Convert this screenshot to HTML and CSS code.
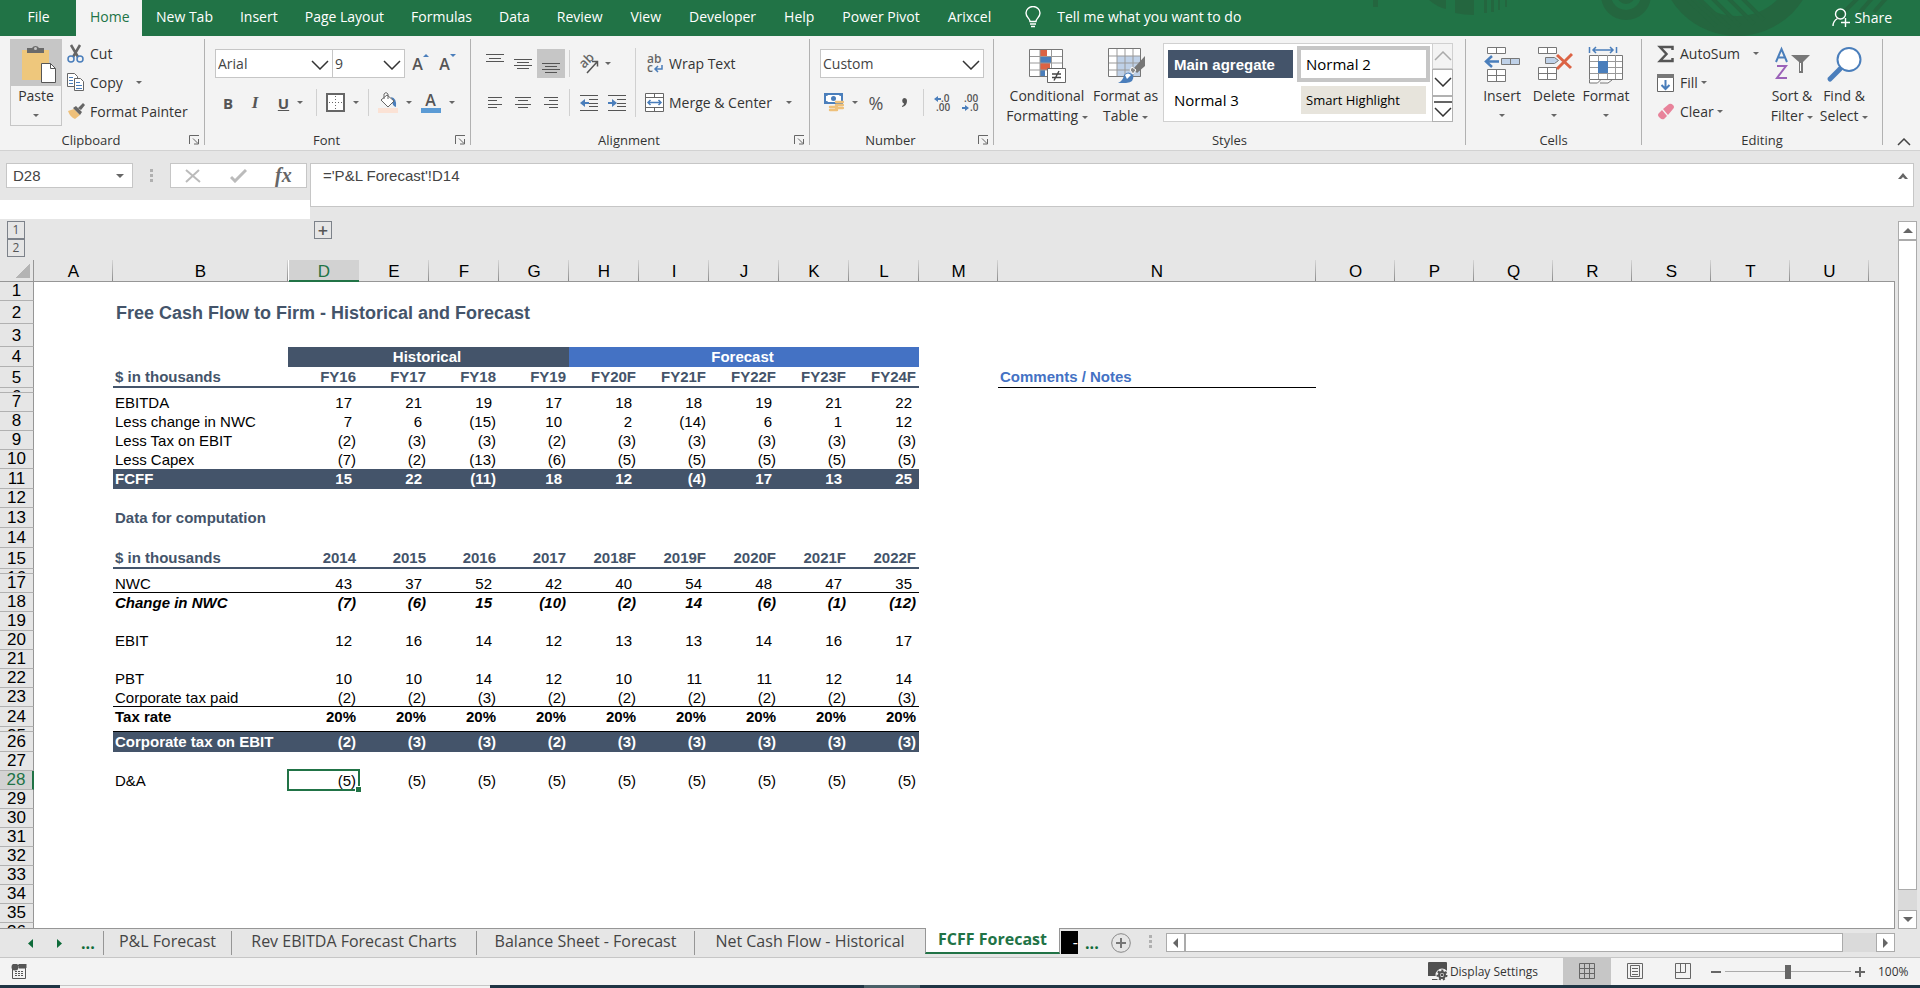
FILE: index.html
```html
<!DOCTYPE html>
<html lang="en">
	<head>
		<meta charset="UTF-8" />
		<meta name="viewport" content="width=device-width, initial-scale=1.0" />
		<title>FCFF Forecast - Excel</title>
		<link rel="stylesheet" href="styles.css">
	</head>
	<body>
		<header class="titlebar">
			<svg class="deco" width="560" height="36" viewBox="0 0 560 36">
				<g fill="#24663f">
					<rect x="13" width="5" height="7" />
					<path d="M69 0h17v9q-9-2-17-9zM95 0h19v15q-10 0-19-2z" />
					<path d="M124 0h3v13h-3zM131 0h3v12h-3zM138 0h2v10h-2zM145 0h2v7h-2z" />
				</g>
				<g fill="none" stroke="#24663f">
					<circle cx="266" cy="-5" r="20" stroke-width="10" />
					<circle cx="266" cy="-5" r="6" stroke-width="6" />
					<circle cx="377" cy="-42" r="68" stroke-width="20" />
					<path d="M324-4l32 30M336-4l34 32M350-4l30 30M366-4l28 28M380-4l24 24M476 20l24-24M500 12l14-16M514 12l14-16" stroke-width="4" />
				</g>
			</svg>
			<nav class="tabs">
				<button class="file">File</button>
				<button class="home">Home</button>
				<button>New Tab</button>
				<button>Insert</button>
				<button>Page Layout</button>
				<button>Formulas</button>
				<button>Data</button>
				<button>Review</button>
				<button>View</button>
				<button>Developer</button>
				<button>Help</button>
				<button>Power Pivot</button>
				<button>Arixcel</button>
			</nav>
			<button class="tellme">
				<svg width="16" height="22" viewBox="0 0 16 22" fill="none" stroke="#fff" stroke-width="1.4"><path d="M5 15.500c0-3-4-4-4-8.500a7 6.500 0 0 1 14 0c0 4.500-4 5.500-4 8.500zM5 18h6M6 20.500h4" /></svg>
				Tell me what you want to do
			</button>
			<button class="share">
				<svg width="18" height="20" viewBox="0 0 18 20" fill="none" stroke="#fff" stroke-width="1.400"><circle cx="8.500" cy="6" r="5" /><path d="M1 18c0-4 2-6 4.500-7.500M9 14.500h9M13.500 10v9" /></svg>
				Share
			</button>
		</header>

		<section class="ribbon">
			<div class="group clipboard">
				<div class="body">
					<button class="paste">
						<span class="paste-icon">
							<svg width="36" height="40" viewBox="0 0 36 40"><path d="M2 5h27v30H2z" fill="#eec77c" /><path d="M7 8V3h5a4 4 0 0 1 7 0h5v5z" fill="#6a6a6a" /><circle cx="15.500" cy="3.500" r="1.500" fill="#c6c6c6" /><path d="M21.500 18.500h9l5 5v14h-14z" fill="#fff" stroke="#555" /><path d="M30.500 18.500v5h5" fill="none" stroke="#555" /></svg>
						</span>
						<span>Paste</span>
						<i class="caret"></i>
					</button>
					<div class="stack">
						<button>
							<svg width="18" height="19" viewBox="0 0 18 19" fill="none"><path d="M4 1l7 12M13 1L6 13" stroke="#666" stroke-width="2.500" /><circle cx="4" cy="15" r="3" stroke="#4a7ebb" stroke-width="1.500" /><circle cx="13" cy="15" r="3" stroke="#4a7ebb" stroke-width="1.500" /></svg>
							Cut
						</button>
						<button>
							<svg width="18" height="19" viewBox="0 0 18 19" fill="#fff" stroke="#666"><path d="M.5.500h7l3 3v10H.500z" /><path d="M7.500 5.500h6l3 3v9h-9z" /><path d="M2 4.500h4M2 7.500h4M2 10.500h4M9 9.500h4M9 12.500h6M9 15.500h6" stroke="#4a7ebb" /></svg>
							Copy <i class="caret far"></i>
						</button>
						<button>
							<svg width="18" height="17" viewBox="0 0 18 17"><path d="M1 8l6-2 6 6-5 4q-5-2-7-8z" fill="#eec07a" /><path d="M6 5l3-2 6 6-2 3zM11 5l5-5 2 2-4 5z" fill="#666" /></svg>
							Format Painter
						</button>
					</div>
				</div>
				<footer><span>Clipboard</span><svg class="launch" width="11" height="10" viewBox="0 0 11 10" fill="none" stroke="#666"><path d="M.5 9V.5H10M4 3.500l5 5M9.500 4v5H5" /></svg></footer>
			</div>

			<div class="group font">
				<div class="body rows">
					<div class="row">
						<label class="combo family"><select aria-label="Font"><option>Arial</option></select><svg width="18" height="10" viewBox="0 0 18 10" fill="none" stroke="#333" stroke-width="1.500"><path d="M1 1l8 8 8-8" /></svg></label>
						<label class="combo size"><select aria-label="Font size"><option>9</option></select><svg width="18" height="10" viewBox="0 0 18 10" fill="none" stroke="#333" stroke-width="1.500"><path d="M1 1l8 8 8-8" /></svg></label>
						<button class="tool grow"><b>A</b><svg width="6" height="3" viewBox="0 0 6 3" fill="#4a7ebb"><path d="M0 3l3-3 3 3z" /></svg></button>
						<button class="tool grow"><b>A</b><svg width="6" height="3" viewBox="0 0 6 3" fill="#4a7ebb"><path d="M0 0l3 3 3-3z" /></svg></button>
					</div>
					<div class="row">
						<button class="tool letter"><b>B</b></button>
						<button class="tool letter"><i>I</i></button>
						<button class="tool wide letter"><u>U</u><i class="caret"></i></button>
						<span class="sep"></span>
						<button class="tool wide">
							<svg width="19" height="19" viewBox="0 0 19 19" fill="#fff" stroke="#666"><rect x="1" y="1" width="17" height="17" stroke-width="2" /><path d="M9.500 3v14M3 9.500h14" stroke-dasharray="1 2" /></svg>
							<i class="caret"></i>
						</button>
						<span class="sep"></span>
						<button class="tool wide">
							<svg width="20" height="21" viewBox="0 0 20 21"><path d="M13 5q6 1 5 10-4-1-4-7z" fill="#4a7ebb" /><path d="M3 8l6-5 7 6-6 6zM6 7V2q2-3 4 0v5" fill="#fff" stroke="#666" /><path d="M0 16h20v5H0z" fill="#fbe2d5" /></svg>
							<i class="caret"></i>
						</button>
						<button class="tool wide">
							<span class="fontcolor">A</span>
							<i class="caret"></i>
						</button>
					</div>
				</div>
				<footer><span>Font</span><svg class="launch" width="11" height="10" viewBox="0 0 11 10" fill="none" stroke="#666"><path d="M.5 9V.5H10M4 3.500l5 5M9.500 4v5H5" /></svg></footer>
			</div>

			<div class="group align">
				<div class="body">
					<div class="rows">
						<div class="row">
							<button class="tool" aria-label="Top align"><svg width="18" height="20" viewBox="0 0 18 20" stroke="#555"><path d="M0 .5h18M3 4.500h12M0 7.500h18" /></svg></button>
							<button class="tool" aria-label="Middle align"><svg width="18" height="20" viewBox="0 0 18 20" stroke="#555"><path d="M0 5.500h18M3 8.500h12M0 11.500h18M3 14.500h12" /></svg></button>
							<button class="tool on" aria-label="Bottom align"><svg width="18" height="20" viewBox="0 0 18 20" stroke="#555"><path d="M0 9.500h18M3 12.500h12M0 15.500h18M3 18.500h12" /></svg></button>
							<span class="sep"></span>
							<button class="tool wide orient" aria-label="Orientation">
								<svg width="20" height="20" viewBox="0 0 20 20"><text transform="translate(5 15) rotate(-45)" font-family="Open Sans" font-size="13" font-weight="600" fill="#666">ab</text><path d="M8 19L18 8M13 7.500h5.500v5" fill="none" stroke="#555" stroke-width="1.500" /></svg>
								<i class="caret"></i>
							</button>
						</div>
						<div class="row">
							<button class="tool" aria-label="Align left"><svg width="14" height="11" viewBox="0 0 14 11" stroke="#555"><path d="M0 .5h14M0 3.500h9M0 7.500h14M0 10.500h9" /></svg></button>
							<button class="tool" aria-label="Center"><svg width="16" height="11" viewBox="0 0 16 11" stroke="#555"><path d="M0 .5h16M3 3.500h10M0 7.500h16M3 10.500h10" /></svg></button>
							<button class="tool" aria-label="Align right"><svg width="14" height="11" viewBox="0 0 14 11" stroke="#555"><path d="M0 .5h14M5 3.500h9M0 7.500h14M5 10.500h9" /></svg></button>
							<span class="sep"></span>
							<button class="tool" aria-label="Decrease indent"><svg width="18" height="16" viewBox="0 0 18 16"><path d="M0 .5h18M9 4.500h9M9 8.500h9M9 11.500h9M0 15.500h18" stroke="#555" /><path d="M0 8l5-4v3h4v2H5v3z" fill="#4a7ebb" /></svg></button>
							<button class="tool" aria-label="Increase indent"><svg width="18" height="16" viewBox="0 0 18 16"><path d="M0 .5h18M9 4.500h9M9 8.500h9M9 11.500h9M0 15.500h18" stroke="#555" /><path d="M9 8l-5-4v3H0v2h4v3z" fill="#4a7ebb" /></svg></button>
						</div>
					</div>
					<span class="sep tall"></span>
					<div class="rows text">
						<button class="labelled">
							<svg width="19" height="20" viewBox="0 0 19 20"><text x="2" y="9" font-family="Open Sans" font-size="12" font-weight="600" fill="#666">ab</text><text x="2" y="18" font-family="Open Sans" font-size="12" font-weight="600" fill="#666">c</text><path d="M10 15h7v-4M13 12l-3 3 3 3" fill="none" stroke="#4a7ebb" stroke-width="1.500" /></svg>
							Wrap Text
						</button>
						<button class="labelled">
							<svg width="19" height="19" viewBox="0 0 19 19" fill="#fff" stroke="#666"><path d="M.5.500h18v18H.500zM.5 4.500h18M.5 14.500h18M9.500 0v4M9.500 15v4" /><path d="M3 9.500h13M5.500 7L3 9.500 5.500 12M13.500 7L16 9.500 13.500 12" fill="none" stroke="#4a7ebb" stroke-width="1.500" /></svg>
							Merge &amp; Center <i class="caret far"></i>
						</button>
					</div>
				</div>
				<footer><span>Alignment</span><svg class="launch" width="11" height="10" viewBox="0 0 11 10" fill="none" stroke="#666"><path d="M.5 9V.5H10M4 3.500l5 5M9.500 4v5H5" /></svg></footer>
			</div>

			<div class="group number">
				<div class="body rows">
					<div class="row">
						<label class="combo format"><select aria-label="Number format"><option>Custom</option></select><svg width="18" height="10" viewBox="0 0 18 10" fill="none" stroke="#333" stroke-width="1.500"><path d="M1 1l8 8 8-8" /></svg></label>
					</div>
					<div class="row">
						<button class="tool wide" aria-label="Accounting format">
							<svg width="20" height="19" viewBox="0 0 20 19"><path d="M0 0h19v11H0z" fill="#4a7ebb" /><path d="M2 3q2 0 2-1h11q0 1 2 1v5q-2 0-2 1H4q0-1-2-1z" fill="#fff" /><circle cx="9.500" cy="5.500" r="2.500" fill="#4a7ebb" /><path d="M12 9h7M12 12h7M12 15h7M6 14h7M6 17h7" stroke="#eec07a" stroke-width="2.400" stroke-linecap="round" /></svg>
							<i class="caret"></i>
						</button>
						<button class="tool percent">%</button>
						<button class="tool" aria-label="Comma style"><svg width="6" height="9" viewBox="0 0 6 9" fill="#555"><path d="M3 0a3 3 0 0 1 3 3q0 5-5 6v-1q2-1 2-2.500a3 3 0 0 1 0-5.500z" /></svg></button>
						<span class="sep"></span>
						<button class="tool" aria-label="Increase decimal"><svg width="17" height="18" viewBox="0 0 17 18" font-family="Open Sans" font-size="10" font-weight="600" fill="#555"><path d="M0 5l4-3v2h3v2H4v2z" fill="#4a7ebb" /><text x="7" y="8">.0</text><text x="2" y="17">.00</text></svg></button>
						<button class="tool" aria-label="Decrease decimal"><svg width="17" height="18" viewBox="0 0 17 18" font-family="Open Sans" font-size="10" font-weight="600" fill="#555"><path d="M7 14l-4-3v2H0v2h3v2z" fill="#4a7ebb" /><text x="2" y="8">.00</text><text x="8" y="17">.0</text></svg></button>
					</div>
				</div>
				<footer><span>Number</span><svg class="launch" width="11" height="10" viewBox="0 0 11 10" fill="none" stroke="#666"><path d="M.5 9V.5H10M4 3.500l5 5M9.500 4v5H5" /></svg></footer>
			</div>

			<div class="group styles">
				<div class="body">
					<button class="big cond">
						<svg width="38" height="36" viewBox="0 0 38 36"><path d="M1.500 1.500h33v27h-33z" fill="#fff" /><path d="M12 1h7v7h-7zM12 15h10v7H12z" fill="#dc6344" /><path d="M12 8h11v7H12zM12 22h5v7h-5z" fill="#4a7ebb" /><path d="M12 1v28M23.500 1v28M1 8.500h34M1 15h34M1 22h34" stroke="#999" fill="none" /><path d="M1.500 1.500h33v27h-33z" fill="none" stroke="#777" /><path d="M19.500 20.500h18v14h-18z" fill="#fff" stroke="#666" /><path d="M24 26h9M24 29.500h9M31 23l-5 9.500" stroke="#444" stroke-width="1.400" /></svg>
						<span>Conditional<br>Formatting <i class="caret"></i></span>
					</button>
					<button class="big">
						<svg width="38" height="36" viewBox="0 0 38 36"><path d="M1.500.500h32v28h-32z" fill="#fff" /><path d="M10 8h24v21H10z" fill="#bfd1e8" /><path d="M10 0v29M18 0v29M26 0v29M1 8h33M1 15h33M1 22h33" stroke="#999" /><path d="M1.500.500h32v28h-32z" fill="none" stroke="#777" /><path d="M38 8v10l-8 7-4-4z" fill="#777" /><path d="M29 22l-4-3-2 3 3 4z" fill="#888" stroke="#fff" /><path d="M11 35q5-2 6-8 4-5 9 0 2 7-7 8z" fill="#4a7ebb" /><path d="M18 27q3-3 6 0l-4 4z" fill="#fff" /></svg>
						<span>Format as<br>Table <i class="caret"></i></span>
					</button>
					<div class="gallery">
						<div class="swatches">
							<button class="agregate">Main agregate</button>
							<button class="picked">Normal 2</button>
							<button>Normal 3</button>
							<button class="smart">Smart Highlight</button>
						</div>
						<div class="scroller">
							<button class="dim" aria-label="Previous"><svg width="18" height="10" viewBox="0 0 18 10" fill="none" stroke="#aaa" stroke-width="1.500"><path d="M1 9l8-8 8 8" /></svg></button>
							<button aria-label="Next"><svg width="18" height="10" viewBox="0 0 18 10" fill="none" stroke="#333" stroke-width="1.500"><path d="M1 1l8 8 8-8" /></svg></button>
							<button aria-label="More"><svg width="18" height="16" viewBox="0 0 18 16" fill="none" stroke="#333" stroke-width="1.500"><path d="M0 1h18M1 7l8 8 8-8" /></svg></button>
						</div>
					</div>
				</div>
				<footer><span>Styles</span></footer>
			</div>

			<div class="group cells">
				<div class="body">
					<button class="big">
						<svg width="38" height="36" viewBox="0 0 38 36" fill="#fff" stroke="#777"><path d="M4.500.500h18v6h-18zM13.500 0v6M4.500 22.500h18v12h-18zM13.500 22v12M4 28.500h18" /><path d="M18.500 11.500h18v6h-18zM27.500 12v6" fill="#bfd1e8" /><path d="M16 14.500H3M9 9l-6 5.500 6 5.500" fill="none" stroke="#4a7ebb" stroke-width="2.500" /></svg>
						<span>Insert</span><i class="caret"></i>
					</button>
					<button class="big">
						<svg width="38" height="36" viewBox="0 0 38 36" fill="#fff" stroke="#777"><path d="M3.500.500h18v6h-18zM12.500 0v6M3.500 20.500h18v12h-18zM12.500 20v12M3 26.500h18" /><path d="M10.500 10.500h9l4 3-4 3h-9z" fill="#bfd1e8" /><path d="M22 8l14 13M37 7L22 22" stroke="#dc6344" stroke-width="3" /></svg>
						<span>Delete</span><i class="caret"></i>
					</button>
					<button class="big">
						<svg width="38" height="38" viewBox="0 0 38 38" fill="#fff" stroke="#777"><path d="M2.500 9.500h33v24h-33z" /><path d="M3 15.500h32M3 21.500h32M3 27.500h32M11.500 9v24M20.500 9v24M28.500 9v24" stroke="#999" /><path d="M11 15h10v12H11z" fill="#4a7ebb" stroke="none" /><path d="M2.500 34v3h8l3-3M13 37h8l4-3" /><path d="M2.500 1v6M29.500 1v6M6 4h20M9 1L6 4l3 3M23 1l3 3-3 3" fill="none" stroke="#4a7ebb" stroke-width="1.500" /></svg>
						<span>Format</span><i class="caret"></i>
					</button>
				</div>
				<footer><span>Cells</span></footer>
			</div>

			<div class="group editing">
				<div class="body">
					<div class="stack">
						<button>
							<svg width="18" height="18" viewBox="0 0 18 18" fill="none" stroke="#555" stroke-width="2.500"><path d="M15.500 5V2H3l6.500 7L3 16h12.500v-3" /></svg>
							AutoSum <i class="caret far"></i>
						</button>
						<button>
							<svg width="18" height="18" viewBox="0 0 18 18"><path d="M.5.500h16v17H.500z" fill="#fff" stroke="#666" /><path d="M0 0h17v4H0z" fill="#777" /><path d="M8.500 6v9M4.500 11l4 4 4-4" fill="none" stroke="#4a7ebb" stroke-width="2" /></svg>
							Fill <i class="caret"></i>
						</button>
						<button>
							<svg width="18" height="17" viewBox="0 0 18 17" fill="#e8829a"><path d="M6 6l6-5q2-1 4 1t0 4l-5 6zM5 7l5 6-3 3q-2 1-4-1l-1-1q-2-2 0-4z" /></svg>
							Clear <i class="caret"></i>
						</button>
					</div>
					<button class="big sort">
						<svg width="38" height="36" viewBox="0 0 38 36" fill="none" stroke-width="2"><path d="M3 15L8.500 2 14 15M5 10.500h7" stroke="#4a7ebb" /><path d="M4 19h9L4 31h10" stroke="#9b62b8" /><path d="M18 8h19l-7 7v11h-4V15z" fill="#777" stroke="none" /><path d="M27.500 16v8" stroke="#fff" stroke-width="1" /></svg>
						<span>Sort &amp;<br>Filter <i class="caret"></i></span>
					</button>
					<button class="big">
						<svg width="38" height="36" viewBox="0 0 38 36"><path d="M5 32l10-10" stroke="#4a7ebb" stroke-width="5" stroke-linecap="round" /><circle cx="24" cy="12.500" r="11.500" fill="#fff" stroke="#4a7ebb" stroke-width="2" /></svg>
						<span>Find &amp;<br>Select <i class="caret"></i></span>
					</button>
				</div>
				<footer><span>Editing</span></footer>
			</div>
			<button class="collapse" aria-label="Collapse the ribbon"><svg width="14" height="8" viewBox="0 0 14 8" fill="none" stroke="#444" stroke-width="1.500"><path d="M1 7l6-6 6 6" /></svg></button>
		</section>

		<section class="formulabar">
			<div class="left">
				<div class="namebox"><input aria-label="Name box" value="D28"><i class="caret big-caret"></i></div>
				<span class="grip"></span>
				<div class="fx">
					<button aria-label="Cancel"><svg width="16" height="14" viewBox="0 0 16 14" fill="none" stroke="#bbb" stroke-width="2"><path d="M1 1l14 12M14 1L1 13" /></svg></button>
					<button aria-label="Enter"><svg width="17" height="14" viewBox="0 0 17 14" fill="none" stroke="#bbb" stroke-width="3"><path d="M1 8l4 4L16 1" /></svg></button>
					<button class="fn">fx</button>
				</div>
			</div>
			<div class="formula">
				<input aria-label="Formula" value="='P&amp;L Forecast'!D14">
				<svg width="10" height="6" viewBox="0 0 10 6" fill="#666"><path d="M0 6l5-6 5 6H7L5 4 3 6z" /></svg>
			</div>
		</section>

		<main class="workbook">
			<div class="grid">
				<div class="outline">
					<div class="levels"><button>1</button><button>2</button></div>
					<button class="expand">+</button>
				</div>
				<table class="sheet">
					<colgroup>
						<col class="rowhead"><col class="std"><col class="b"><col class="c">
						<col class="yr"><col class="yr"><col class="yr"><col class="yr"><col class="yr"><col class="yr"><col class="yr"><col class="yr"><col class="yr">
						<col class="std"><col class="notes">
						<col class="std"><col class="std"><col class="std"><col class="std"><col class="std"><col class="std"><col class="std"><col>
					</colgroup>
					<thead>
						<tr>
							<th class="corner"></th><th>A</th><th>B</th><th class="hidden-col"></th><th class="sel">D</th><th>E</th><th>F</th><th>G</th><th>H</th><th>I</th><th>J</th><th>K</th><th>L</th><th>M</th><th>N</th><th>O</th><th>P</th><th>Q</th><th>R</th><th>S</th><th>T</th><th>U</th><th class="last"></th>
						</tr>
					</thead>
					<tbody>
						<tr><th>1</th><td colspan="22"></td></tr>
						<tr class="h23"><th>2</th><td></td><td class="title" colspan="21">Free Cash Flow to Firm - Historical and Forecast</td></tr>
						<tr class="h23"><th>3</th><td colspan="22"></td></tr>
						<tr class="h20 band"><th>4</th><td></td><td></td><td class="hist" colspan="5">Historical</td><td class="fore" colspan="5">Forecast</td><td colspan="10"></td></tr>
						<tr class="h21 years"><th>5</th><td></td><td colspan="2">$ in thousands</td><td>FY16</td><td>FY17</td><td>FY18</td><td>FY19</td><td>FY20F</td><td>FY21F</td><td>FY22F</td><td>FY23F</td><td>FY24F</td><td class="plain"></td><td class="comments">Comments / Notes</td><td class="plain" colspan="8"></td></tr>
						<tr class="h5"><th><div>6</div></th><td colspan="22"></td></tr>
						<tr><th>7</th><td></td><td colspan="2">EBITDA</td><td class="pos">17</td><td class="pos">21</td><td class="pos">19</td><td class="pos">17</td><td class="pos">18</td><td class="pos">18</td><td class="pos">19</td><td class="pos">21</td><td class="pos">22</td><td colspan="10"></td></tr>
						<tr><th>8</th><td></td><td colspan="2">Less change in NWC</td><td class="pos">7</td><td class="pos">6</td><td>(15)</td><td class="pos">10</td><td class="pos">2</td><td>(14)</td><td class="pos">6</td><td class="pos">1</td><td class="pos">12</td><td colspan="10"></td></tr>
						<tr><th>9</th><td></td><td colspan="2">Less Tax on EBIT</td><td>(2)</td><td>(3)</td><td>(3)</td><td>(2)</td><td>(3)</td><td>(3)</td><td>(3)</td><td>(3)</td><td>(3)</td><td colspan="10"></td></tr>
						<tr><th>10</th><td></td><td colspan="2">Less Capex</td><td>(7)</td><td>(2)</td><td>(13)</td><td>(6)</td><td>(5)</td><td>(5)</td><td>(5)</td><td>(5)</td><td>(5)</td><td colspan="10"></td></tr>
						<tr class="h20 total"><th>11</th><td></td><td colspan="2">FCFF</td><td class="pos">15</td><td class="pos">22</td><td>(11)</td><td class="pos">18</td><td class="pos">12</td><td>(4)</td><td class="pos">17</td><td class="pos">13</td><td class="pos">25</td><td colspan="10"></td></tr>
						<tr><th>12</th><td colspan="22"></td></tr>
						<tr class="h20 section"><th>13</th><td></td><td colspan="21">Data for computation</td></tr>
						<tr class="h20"><th>14</th><td colspan="22"></td></tr>
						<tr class="h21 years"><th>15</th><td></td><td colspan="2">$ in thousands</td><td>2014</td><td>2015</td><td>2016</td><td>2017</td><td>2018F</td><td>2019F</td><td>2020F</td><td>2021F</td><td>2022F</td><td class="plain" colspan="10"></td></tr>
						<tr class="h5"><th><div>16</div></th><td colspan="22"></td></tr>
						<tr class="ruled"><th>17</th><td></td><td colspan="2">NWC</td><td class="pos">43</td><td class="pos">37</td><td class="pos">52</td><td class="pos">42</td><td class="pos">40</td><td class="pos">54</td><td class="pos">48</td><td class="pos">47</td><td class="pos">35</td><td colspan="10"></td></tr>
						<tr class="strong italic"><th>18</th><td></td><td colspan="2">Change in NWC</td><td>(7)</td><td>(6)</td><td class="pos">15</td><td>(10)</td><td>(2)</td><td class="pos">14</td><td>(6)</td><td>(1)</td><td>(12)</td><td colspan="10"></td></tr>
						<tr><th>19</th><td colspan="22"></td></tr>
						<tr><th>20</th><td></td><td colspan="2">EBIT</td><td class="pos">12</td><td class="pos">16</td><td class="pos">14</td><td class="pos">12</td><td class="pos">13</td><td class="pos">13</td><td class="pos">14</td><td class="pos">16</td><td class="pos">17</td><td colspan="10"></td></tr>
						<tr><th>21</th><td colspan="22"></td></tr>
						<tr><th>22</th><td></td><td colspan="2">PBT</td><td class="pos">10</td><td class="pos">10</td><td class="pos">14</td><td class="pos">12</td><td class="pos">10</td><td class="pos">11</td><td class="pos">11</td><td class="pos">12</td><td class="pos">14</td><td colspan="10"></td></tr>
						<tr class="ruled"><th>23</th><td></td><td colspan="2">Corporate tax paid</td><td>(2)</td><td>(2)</td><td>(3)</td><td>(2)</td><td>(2)</td><td>(2)</td><td>(2)</td><td>(2)</td><td>(3)</td><td colspan="10"></td></tr>
						<tr class="h20 strong"><th>24</th><td></td><td colspan="2">Tax rate</td><td>20%</td><td>20%</td><td>20%</td><td>20%</td><td>20%</td><td>20%</td><td>20%</td><td>20%</td><td>20%</td><td colspan="10"></td></tr>
						<tr class="h5"><th><div>25</div></th><td></td><td class="rule" colspan="11"></td><td colspan="10"></td></tr>
						<tr class="h20 total"><th>26</th><td></td><td colspan="2">Corporate tax on EBIT</td><td>(2)</td><td>(3)</td><td>(3)</td><td>(2)</td><td>(3)</td><td>(3)</td><td>(3)</td><td>(3)</td><td>(3)</td><td colspan="10"></td></tr>
						<tr><th>27</th><td colspan="22"></td></tr>
						<tr><th class="sel">28</th><td></td><td colspan="2">D&amp;A</td><td class="active">(5)</td><td>(5)</td><td>(5)</td><td>(5)</td><td>(5)</td><td>(5)</td><td>(5)</td><td>(5)</td><td>(5)</td><td colspan="10"></td></tr>
						<tr><th>29</th><td colspan="22"></td></tr>
						<tr><th>30</th><td colspan="22"></td></tr>
						<tr><th>31</th><td colspan="22"></td></tr>
						<tr><th>32</th><td colspan="22"></td></tr>
						<tr><th>33</th><td colspan="22"></td></tr>
						<tr><th>34</th><td colspan="22"></td></tr>
						<tr><th>35</th><td colspan="22"></td></tr>
						<tr><th>36</th><td colspan="22"></td></tr>
					</tbody>
				</table>
			</div>
			<div class="vscroll">
				<button aria-label="Scroll up"><svg width="10" height="5" viewBox="0 0 10 5" fill="#666"><path d="M0 5l5-5 5 5z" /></svg></button>
				<span class="thumb"></span>
				<button aria-label="Scroll down"><svg width="10" height="5" viewBox="0 0 10 5" fill="#666"><path d="M0 0l5 5 5-5z" /></svg></button>
			</div>
		</main>

		<nav class="sheettabs">
			<div class="arrows">
				<button aria-label="Previous sheet"><svg width="5" height="9" viewBox="0 0 5 9" fill="#0e6b3a"><path d="M5 0v9L0 4.500z" /></svg></button>
				<button aria-label="Next sheet"><svg width="5" height="9" viewBox="0 0 5 9" fill="#0e6b3a"><path d="M0 0v9l5-4.500z" /></svg></button>
				<button class="dots">...</button>
			</div>
			<button class="tab pl">P&amp;L Forecast</button>
			<button class="tab rev">Rev EBITDA Forecast Charts</button>
			<button class="tab bs">Balance Sheet - Forecast</button>
			<button class="tab ncf">Net Cash Flow - Historical</button>
			<button class="tab current">FCFF Forecast</button>
			<button class="black">-</button>
			<button class="dots more">...</button>
			<button class="add" aria-label="New sheet"><svg width="20" height="20" viewBox="0 0 20 20" fill="none" stroke="#888"><circle cx="10" cy="10" r="9.300" /><path d="M10 5v10M5 10h10" stroke-width="2" stroke="#777" /></svg></button>
			<span class="grip"></span>
			<div class="hscroll">
				<button aria-label="Scroll left"><svg width="5" height="10" viewBox="0 0 5 10" fill="#666"><path d="M5 0v10L0 5z" /></svg></button>
				<span class="thumb"></span>
				<button aria-label="Scroll right"><svg width="5" height="10" viewBox="0 0 5 10" fill="#666"><path d="M0 0v10l5-5z" /></svg></button>
			</div>
		</nav>

		<footer class="status">
			<svg class="macro" width="16" height="15" viewBox="0 0 16 15" fill="none" stroke="#555"><path d="M1.500 5v9.500h13v-13H7" /><path d="M8 0h7v4H8z" fill="#555" /><circle cx="4" cy="3" r="3.500" fill="#555" stroke="none" /><path d="M4 7.500h9M4 9.500h9M4 11.500h9" stroke-dasharray="2 1" /></svg>
			<button class="display">
				<svg width="20" height="19" viewBox="0 0 20 19"><path d="M1 0h17q1 0 1 1v13H0V1q0-1 1-1zM4 17h6v1H4z" fill="#505050" /><circle cx="14" cy="13" r="4" fill="none" stroke="#f3f3f3" stroke-width="5" /><circle cx="14" cy="13" r="3" fill="none" stroke="#505050" stroke-width="2" /><circle cx="14" cy="13" r="4.500" fill="none" stroke="#505050" stroke-width="2" stroke-dasharray="2 2" /></svg>
				Display Settings
			</button>
			<div class="views">
				<button class="on" aria-label="Normal view"><svg width="17" height="17" viewBox="0 0 17 17" fill="none" stroke="#666"><path d="M.5.500h15v15H.500zM5.500 0v16M10.500 0v16M0 5.500h16M0 10.500h16" /></svg></button>
				<button aria-label="Page layout view"><svg width="17" height="17" viewBox="0 0 17 17" fill="none" stroke="#666"><path d="M.5.500h15v15H.500zM3.500 2.500h9v11h-9zM5 5.500h6M5 8.500h6M5 11.500h6" /></svg></button>
				<button aria-label="Page break view"><svg width="17" height="17" viewBox="0 0 17 17" fill="none" stroke="#666"><path d="M.5.500h15v15H.500zM.5 9.500h10V0M5.500 0v9" /></svg></button>
			</div>
			<button class="zoombtn" aria-label="Zoom out"><svg width="10" height="10" viewBox="0 0 10 10" stroke="#666" stroke-width="2"><path d="M0 5h10" /></svg></button>
			<input class="zoom" type="range" min="0" max="100" value="50" aria-label="Zoom">
			<button class="zoombtn" aria-label="Zoom in"><svg width="10" height="10" viewBox="0 0 10 10" stroke="#666" stroke-width="2"><path d="M0 5h10M5 0v10" /></svg></button>
			<span class="percentage">100%</span>
		</footer>
		<div class="taskbar"><span class="light"></span><span class="faint"></span></div>
	</body>
</html>
```
FILE: styles.css
```css
* {
	box-sizing: border-box;
}
body {
	margin: 0;
	height: 100vh;
	display: flex;
	flex-direction: column;
	overflow: hidden;
	background: #e6e6e6;
	color: #333;
	font-family: "Open Sans", "Noto Sans", sans-serif;
	font-size: 14px;
	line-height: 20px;
}
button,
input,
select {
	font: inherit;
	color: inherit;
	background: none;
	border: none;
	border-radius: 0;
	margin: 0;
	padding: 0;
	white-space: nowrap;
}
svg {
	display: block;
	flex: none;
}

/* title bar */
.titlebar {
	position: relative;
	flex: none;
	display: flex;
	height: 36px;
	background: #217346;
	color: #fff;
}
.deco {
	position: absolute;
	top: 0;
	right: 0;
}
.tabs {
	display: flex;
}
.tabs button {
	padding: 0 14px 2px;
}
.tabs button:nth-child(-n + 7) {
	padding-right: 13px;
}
.tabs .file {
	width: 76px;
}
.tabs .home {
	width: 66px;
	background: #f3f3f3;
	color: #217346;
}
.tellme {
	display: flex;
	align-items: center;
	gap: 16px;
	margin-left: 20px;
	padding-bottom: 2px;
}
.share {
	position: relative;
	display: flex;
	align-items: center;
	gap: 4px;
	margin-left: auto;
	margin-right: 28px;
}

/* ribbon */
.ribbon {
	flex: none;
	display: flex;
	height: 115px;
	background: #f3f3f3;
	border-bottom: 1px solid #d2d2d2;
}
.group {
	display: flex;
	flex-direction: column;
	flex: none;
	margin: 3px 0 5px;
	border-right: 1px solid #b1b1b1;
}
.clipboard {
	width: 205px;
}
.font {
	width: 266px;
}
.align {
	width: 339px;
}
.number {
	width: 184px;
}
.styles {
	width: 472px;
}
.cells {
	width: 176px;
}
.editing {
	width: 241px;
}
.body {
	display: flex;
	flex: 1;
}
.group footer {
	position: relative;
	height: 14px;
	font-size: 13px;
	line-height: 18px;
	text-align: center;
	padding-right: 22px;
}
.styles footer,
.cells footer,
.editing footer {
	padding-right: 0;
}
.launch {
	position: absolute;
	right: 4px;
	top: 4px;
}
.caret {
	display: inline-block;
	flex: none;
	border: 3px solid transparent;
	border-top-color: #666;
	border-bottom: none;
	vertical-align: middle;
}
.rows {
	display: flex;
	flex-direction: column;
	gap: 10px;
	padding-top: 10px;
}
.row {
	display: flex;
	align-items: center;
	height: 29px;
}
.tool {
	width: 28px;
	height: 29px;
	display: flex;
	align-items: center;
	justify-content: center;
	color: #555;
}
.tool.wide {
	width: 43px;
	gap: 8px;
}
.on {
	background: #c6c6c6;
}
.sep {
	width: 1px;
	height: 27px;
	margin: 0 4px;
	background: #d0d0d0;
}
.sep.tall {
	height: 69px;
	margin: 9px 9px 0 4px;
}
.stack {
	display: flex;
	flex-direction: column;
}
.stack button {
	display: flex;
	align-items: center;
	gap: 5px;
	height: 29px;
}
.caret.far {
	margin-left: 8px;
}

.paste {
	width: 52px;
	height: 87px;
	margin: 0 5px 0 10px;
	display: flex;
	flex-direction: column;
	align-items: center;
	border: 1px solid #c6c6c6;
}
.paste-icon {
	width: 100%;
	height: 46px;
	padding: 5px 0 0 9px;
	background: #c6c6c6;
}
.paste .caret {
	margin-top: 8px;
}

.font .body {
	padding-left: 10px;
}
.combo {
	position: relative;
	height: 29px;
	border: 1px solid #c6c6c6;
	background: #fff;
}
.combo select {
	appearance: none;
	width: 100%;
	height: 27px;
	padding-left: 2px;
	color: #444;
}
.combo svg {
	position: absolute;
	right: 3px;
	top: 10px;
	pointer-events: none;
}
.family {
	width: 118px;
}
.size {
	width: 73px;
	margin-left: -1px;
	margin-right: 2px;
}
.tool.grow {
	width: 27px;
	align-items: flex-start;
	padding-top: 5px;
}
.grow b {
	font-size: 16px;
	line-height: 20px;
	font-weight: 600;
}
.letter {
	font-size: 15px;
}
.font .letter:first-child {
	width: 26px;
}
.letter b,
.letter u {
	font-weight: 700;
}
.letter i:first-child {
	font-family: "Liberation Serif", serif;
	font-size: 17px;
	font-weight: 700;
}
.fontcolor {
	width: 20px;
	height: 20px;
	line-height: 15px;
	font-size: 16px;
	font-weight: 600;
	border-bottom: 5px solid #5b9bd5;
}
.align .body {
	padding-left: 10px;
}
.align .rows .sep {
	margin-right: 5px;
}
.align .orient {
	gap: 6px;
	width: 40px;
}
.labelled {
	display: flex;
	align-items: center;
	gap: 5px;
	height: 29px;
}
.labelled .caret.far {
	margin-left: 9px;
}
.number .body {
	padding-left: 10px;
}
.format {
	width: 164px;
}
.number .tool.wide {
	width: 42px;
}
.percent {
	font-size: 18px;
}
.number .sep {
	margin: 0 4px 0 5px;
}

.big {
	width: 52px;
	height: 87px;
	display: flex;
	flex-direction: column;
	align-items: center;
	padding-top: 7px;
}
.big svg {
	height: 38px;
	margin-bottom: 2px;
}
.big > .caret {
	margin-top: 8px;
}
.styles .big {
	width: 75px;
	padding-top: 9px;
}
.styles .big svg {
	height: 36px;
}
.styles .cond {
	width: 82px;
}
.styles .body {
	padding-left: 12px;
}
.gallery {
	display: flex;
	width: 290px;
	height: 79px;
	margin-top: 4px;
	border: 1px solid #d0d0d0;
	background: #fff;
}
.swatches {
	display: grid;
	grid-template-columns: 125px 133px;
	grid-template-rows: 36px 36px;
	gap: 0 4px;
	align-items: center;
	padding: 2px 1px 0 4px;
	font-size: 15px;
	color: #000;
}
.swatches button {
	height: 28px;
	padding-left: 6px;
	text-align: left;
}
.swatches .agregate {
	background: #44546a;
	color: #fff;
	font: bold 15px "Liberation Sans", sans-serif;
}
.swatches .picked {
	height: 36px;
	border: 4px solid #c6c6c6;
	padding-left: 5px;
}
.swatches .smart {
	width: 125px;
	margin-left: 4px;
	padding-left: 5px;
	background: #e7e4dc;
	font-size: 13px;
}
.scroller {
	display: flex;
	flex-direction: column;
	width: 21px;
	margin: -1px -1px -1px auto;
}
.scroller button {
	flex: 1;
	display: flex;
	align-items: center;
	justify-content: center;
	border: 1px solid #b1b1b1;
	background: #fff;
}
.scroller .dim {
	background: #f3f3f3;
	border-color: #d0d0d0;
}
.cells .body {
	padding-left: 10px;
}
.editing .body {
	padding-left: 15px;
}
.editing .stack {
	width: 109px;
}
.editing .stack .caret:not(.far) {
	margin-left: -2px;
}
.collapse {
	margin: auto auto 4px 14px;
}

/* formula bar */
.formulabar {
	flex: none;
	display: flex;
	height: 68px;
}
.left {
	width: 310px;
	padding: 12px 3px 0 6px;
	display: flex;
	background: linear-gradient(#e6e6e6 49px, #fff 49px);
}
.namebox,
.fx,
.formula {
	display: flex;
	align-items: center;
	height: 25px;
	border: 1px solid #c6c6c6;
	background: #fff;
	font-family: "Liberation Sans", sans-serif;
	font-size: 15px;
	color: #444;
}
.namebox {
	width: 127px;
	padding: 0 8px 0 6px;
}
.namebox input {
	flex: 1;
	min-width: 0;
}
.big-caret {
	border-width: 4px;
	border-bottom: none;
}
.grip {
	width: 3px;
	height: 13px;
	margin: 6px 17px 0;
	background: repeating-linear-gradient(#b0b0b0 0 3px, transparent 3px 5px);
}
.fx {
	width: 137px;
	justify-content: space-around;
}
.fn {
	font: italic bold 20px "Liberation Serif", serif;
	color: #666;
}
.formula {
	flex: 1;
	height: 44px;
	margin: 12px 6px 0 0;
	padding: 0 5px 0 12px;
	align-items: flex-start;
}
.formula input {
	flex: 1;
	height: 22px;
}
.formula svg {
	margin-top: 9px;
}

/* worksheet */
.workbook {
	flex: 1;
	min-height: 0;
	display: flex;
}
.grid {
	flex: 1;
	min-width: 0;
	overflow: hidden;
	border-bottom: 1px solid #969696;
}
.outline {
	display: flex;
	height: 41px;
	padding: 2px 0 0 7px;
	gap: 289px;
}
.levels {
	display: flex;
	flex-direction: column;
}
.outline button {
	width: 18px;
	height: 18px;
	line-height: 14px;
	font-size: 12px;
	border: 1px solid #7d828a;
	color: #555;
}
.outline .expand {
	font-size: 18px;
	font-weight: 600;
}
.sheet {
	width: 100%;
	table-layout: fixed;
	border-spacing: 0;
	background: #fff;
	font-family: "Liberation Sans", sans-serif;
	font-size: 15px;
	line-height: 18px;
	color: #000;
}
.rowhead {
	width: 34px;
}
.std {
	width: 79px;
}
.b {
	width: 175px;
}
.c {
	width: 1px;
}
.yr {
	width: 70px;
}
.notes {
	width: 318px;
}
.sheet th {
	padding: 0;
	background: #e6e6e6;
	font-size: 17px;
	font-weight: normal;
	vertical-align: bottom;
}
.sheet thead th {
	height: 22px;
	border-bottom: 1px solid #969696;
	background: linear-gradient(#d5d5d5, #8c8c8c) right / 1px 100% no-repeat #e6e6e6;
}
.sheet thead th.sel {
	background: #d2d2d2;
	border-bottom: 2px solid #217346;
	line-height: 17px;
	color: #217346;
}
.sheet thead .hidden-col {
	background: #fff;
}
.sheet thead .last {
	background: #e6e6e6;
}
.sheet thead .corner {
	background: linear-gradient(135deg, #e6e6e6 50%, #b4b4b4 50%) 16px 4px / 14px 14px no-repeat #e6e6e6;
	border-right: 1px solid #969696;
}
.sheet tbody th {
	height: 19px;
	line-height: 18px;
	border-bottom: 1px solid #b1b1b1;
	border-right: 1px solid #969696;
}
.sheet tbody th.sel {
	background: #d2d2d2;
	color: #217346;
	border-right: 2px solid #217346;
}
.sheet td {
	padding: 0 3px 0 0;
	text-align: right;
	vertical-align: bottom;
	white-space: nowrap;
}
.sheet td:last-child {
	border-right: 1px solid #969696;
}
.sheet td:nth-child(3) {
	padding-left: 2px;
	text-align: left;
}
.sheet .pos {
	padding-right: 7px;
}
.sheet .h20 th {
	height: 20px;
}
.sheet .h20 td {
	line-height: 20px;
}
.sheet .h21 th {
	height: 21px;
}
.sheet .h23 th {
	height: 23px;
	line-height: 20px;
}
.sheet .h5 th {
	height: 5px;
}
.h5 div {
	height: 4px;
	line-height: 18px;
	overflow: hidden;
}
.h5 td {
	line-height: 0;
}
.sheet td.title:nth-child(3) {
	font-size: 18px;
	font-weight: bold;
	line-height: 22px;
	padding-left: 3px;
	color: #44546a;
}
.sheet .hist,
.sheet .fore {
	font-weight: bold;
	text-align: center;
	color: #fff;
	background: #44546a;
}
.sheet .fore {
	background: #4472c4;
}
.years td,
.section td {
	font-weight: bold;
	color: #44546a;
}
.years td:nth-child(n + 3):not(.plain) {
	border-bottom: 2px solid #44546a;
}
.sheet .years .comments:nth-child(n) {
	text-align: left;
	padding: 0 0 1px 2px;
	border-bottom: 1px solid #000;
	color: #4472c4;
}
.total td:nth-child(n + 3):not(:last-child) {
	font-weight: bold;
	color: #fff;
	background: #44546a;
}
.ruled td:nth-child(n + 3):not(:last-child),
.rule {
	border-bottom: 1px solid #000;
}
.ruled td {
	line-height: 17px;
}
.strong td {
	font-weight: bold;
}
.italic td {
	font-style: italic;
}
.active {
	position: relative;
}
.active::before {
	content: "";
	position: absolute;
	inset: -2px -1px -1px -2px;
	border: 2px solid #217346;
}
.active::after {
	content: "";
	position: absolute;
	right: -2px;
	bottom: -2px;
	width: 5px;
	height: 5px;
	background: #217346;
	outline: 1px solid #fff;
}

.vscroll {
	width: 25px;
	padding: 2px 3px 0;
	display: flex;
	flex-direction: column;
}
.vscroll button,
.hscroll button,
.thumb {
	flex: none;
	display: flex;
	align-items: center;
	justify-content: center;
	background: #fff;
	border: 1px solid #ababab;
}
.vscroll button {
	height: 19px;
}
.vscroll .thumb {
	flex: 1;
	margin-bottom: 20px;
	box-shadow: 0 20px #dadada;
}

/* sheet tabs */
.sheettabs {
	flex: none;
	display: flex;
	height: 29px;
	border-bottom: 1px solid #c6c6c6;
	font-size: 16px;
	color: #444;
}
.arrows {
	display: flex;
	align-items: center;
	width: 104px;
	height: 24px;
	margin-top: 2px;
	padding-left: 28px;
	gap: 24px;
	border-right: 1px solid #969696;
}
.dots {
	font-size: 16px;
	font-weight: 700;
	color: #0e6b3a;
}
.arrows .dots {
	margin-left: -5px;
}
.tab {
	height: 24px;
	margin-top: 2px;
	padding-bottom: 9px;
	border-right: 1px solid #969696;
}
.pl {
	width: 128px;
}
.rev {
	width: 245px;
}
.bs {
	width: 218px;
}
.ncf {
	width: 230px;
	border-right: none;
}
.current {
	width: 135px;
	height: 26px;
	margin-top: -1px;
	padding-bottom: 3px;
	background: #fff;
	border: 1px solid #969696;
	border-top: none;
	border-bottom: 2px solid #217346;
	color: #217346;
	font-weight: 700;
}
.black {
	width: 17px;
	height: 23px;
	margin: 2px 7px 0 1px;
	text-align: right;
	line-height: 15px;
	background: #000;
	color: #fff;
}
.add {
	height: 20px;
	margin: 4px 1px 0 12px;
}
.hscroll {
	flex: 1;
	display: flex;
	height: 19px;
	margin: 4px 25px 0 -3px;
	background: #dadada;
}
.hscroll button {
	width: 19px;
}
.hscroll .thumb {
	flex: 1;
	margin-right: 33px;
}

/* status bar */
.status {
	flex: none;
	display: flex;
	align-items: center;
	height: 27px;
	background: #f3f3f3;
	font-size: 12px;
}
.macro {
	margin-left: 11px;
}
.display {
	display: flex;
	align-items: center;
	gap: 2px;
	margin-left: auto;
	margin-right: 25px;
}
.views {
	display: flex;
	height: 27px;
}
.views button {
	width: 48px;
	display: flex;
	align-items: center;
	justify-content: center;
}
.zoombtn {
	margin: 0 4px;
}
.zoom {
	appearance: none;
	width: 126px;
	height: 14px;
	background: linear-gradient(#ababab, #ababab) center / 100% 1px no-repeat;
}
.zoom::-webkit-slider-thumb {
	appearance: none;
	width: 6px;
	height: 14px;
	background: #666;
}
.percentage {
	width: 32px;
	margin: 0 10px 0 9px;
}
.taskbar {
	flex: none;
	display: flex;
	height: 3px;
	background: #1f3544;
}
.taskbar .light {
	width: 430px;
	margin-left: 60px;
	background: #f3f3f3;
	border-top: 1px solid #c6c6c6;
}
.taskbar .faint {
	width: 56px;
	margin-left: 374px;
	background: #4a6068;
}
```
